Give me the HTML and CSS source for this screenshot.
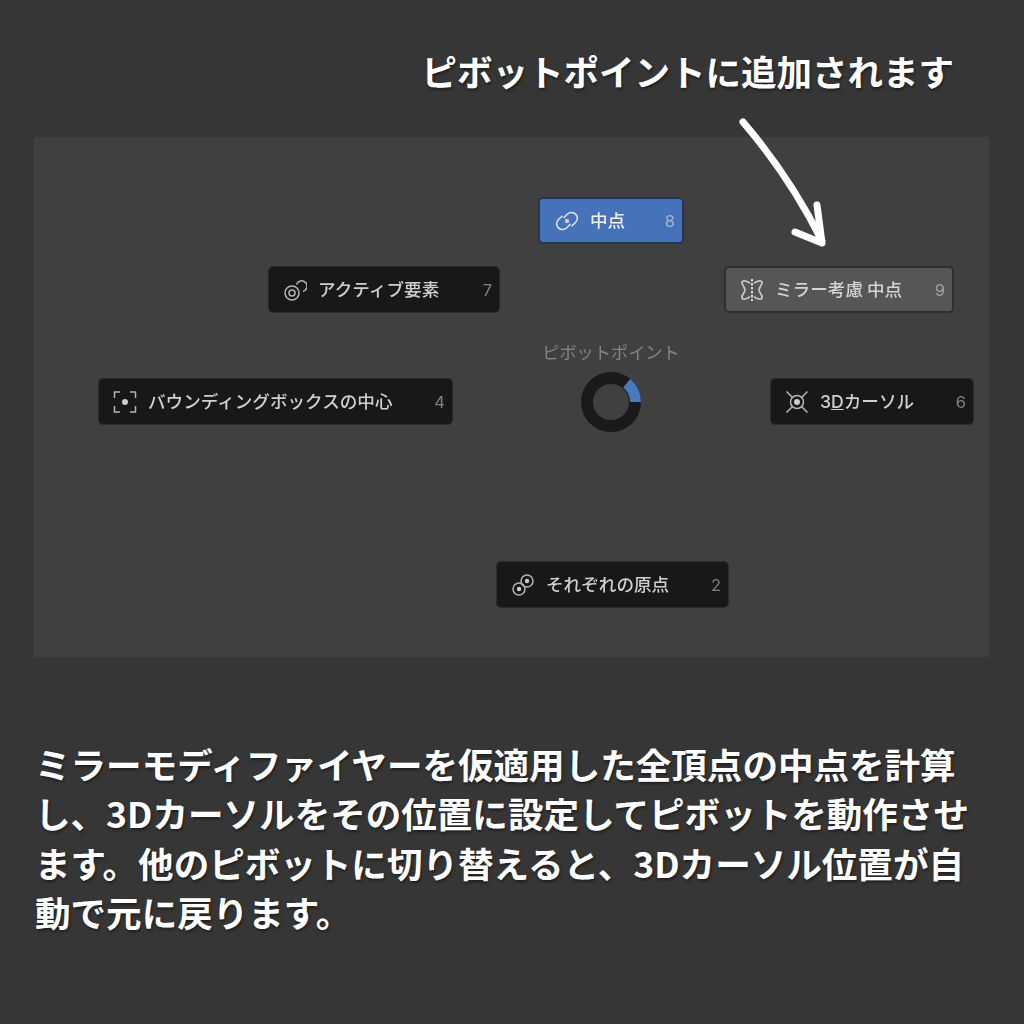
FILE: index.html
```html
<!DOCTYPE html>
<html lang="ja">
  <head>
    <meta charset="UTF-8" />
    <title>ピボットポイント</title>
    <link rel="stylesheet" href="styles.css">
  </head>
  <body>
    <div id="page">
      <h1 class="heading">ピボットポイントに追加されます</h1>

      <div id="panel">
        <div class="pie-item item-mid sel">
          <svg class="icon" viewBox="0 0 24 24"><path d="M8.500 9 12.500 5a5.800 5.800 0 0 1 8.200 8.200l-4.200 4M15.500 15 11.500 19a5.800 5.800 0 0 1-8.200-8.200l4.200-4"/><circle class="dot" cx="12" cy="12" r="2.200"/></svg>
          <span class="label">中点</span>
          <span class="key">8</span>
        </div>

        <div class="pie-item item-active">
          <svg class="icon" viewBox="0 0 24 24"><path d="M13.500 6.500a5.400 5.400 0 1 1 6.500 7"/><circle cx="9" cy="15" r="7"/><circle cx="9" cy="15" r="3"/></svg>
          <span class="label">アクティブ要素</span>
          <span class="key">7</span>
        </div>

        <div class="pie-item item-mirror hover">
          <svg class="icon" viewBox="0 0 24 24"><path d="M10 5.500C8 3 3 2 2 4c-1 2 3 5 3 8s-4 5-3 8c1 2 6 1 8-1.500M14 5.500C16 3 21 2 22 4c1 2-3 5-3 8s4 5 3 8c-1 2-6 1-8-1.500"/><path class="dash" d="M12 1v22"/></svg>
          <span class="label">ミラー考慮 中点</span>
          <span class="key">9</span>
        </div>

        <div class="pie-item item-bbox">
          <svg class="icon" viewBox="0 0 24 24"><path d="M7 2H1.500v6M17 2h5.500v6M7 22H1.500v-6M17 22h5.500v-6"/><circle class="dot" cx="12" cy="12" r="3"/></svg>
          <span class="label">バウンディングボックスの中心</span>
          <span class="key">4</span>
        </div>

        <div class="pie-item item-cursor">
          <svg class="icon" viewBox="0 0 24 24"><circle cx="12" cy="12" r="6.500"/><circle class="dot" cx="12" cy="12" r="3"/><path d="M1.500 1.500 7.500 7.500M22.500 1.500l-6 6M1.500 22.500l6-6M22.500 22.500l-6-6"/></svg>
          <span class="label"><span class="num">3<u>D</u></span>カーソル</span>
          <span class="key">6</span>
        </div>

        <div class="pie-item item-origin">
          <svg class="icon" viewBox="0 0 24 24"><circle cx="16" cy="8" r="6"/><circle class="dot" cx="16" cy="8" r="2.200"/><circle cx="8" cy="16" r="6"/><circle class="dot" cx="8" cy="16" r="2.200"/></svg>
          <span class="label">それぞれの原点</span>
          <span class="key">2</span>
        </div>

        <div class="pie-title">ピボットポイント</div>
        <svg class="pie-ring" viewBox="0 0 60 60">
          <circle class="ring-bg" cx="30" cy="30" r="24"/>
          <path class="ring-sel" d="M45.700 11.200A24.500 24.500 0 0 1 54.500 30"/>
        </svg>
      </div>

      <!-- 矢印はパネルとヘッダーの上に重なる -->
      <svg class="arrow" viewBox="0 0 110 140">
        <path d="M5 5C35 40 62 80 84 124M79 88 84 126 57 115"/>
      </svg>

      <p class="desc">ミラーモディファイヤーを仮適用した全頂点の中点を計算<br>し、3Dカーソルをその位置に設定してピボットを動作させ<br>ます。他のピボットに切り替えると、3Dカーソル位置が自<br>動で元に戻ります。</p>
    </div>
  </body>
</html>
```

FILE: styles.css
```css
* {
  margin: 0;
  padding: 0;
  box-sizing: border-box;
}

body {
  background: #363636;
  font-family: "Noto Sans CJK JP", sans-serif;
}

#page {
  width: 1024px;
  height: 1024px;
  position: relative;
  padding: 46px 34px 0 34px;
  display: flex;
  flex-direction: column;
}

.heading {
  height: 50px;
  line-height: 50px;
  padding-right: 36px;
  text-align: right;
  font-size: 35.500px;
  font-weight: 700;
  color: #fff;
  text-shadow: 1px 2px 3px rgba(0, 0, 0, 0.45);
}

#panel {
  width: 955px;
  height: 520px;
  margin-top: 41px;
  position: relative;
  background: #404040;
  filter: blur(0.5px);
}

.desc {
  margin-top: 82px;
  padding-left: 1px;
  font-size: 35.550px;
  line-height: 49.400px;
  font-weight: 700;
  color: #fff;
  white-space: nowrap;
  text-shadow: 1px 2px 3px rgba(0, 0, 0, 0.45);
}

/* pie menu items */
.pie-item {
  position: absolute;
  height: 47px;
  display: flex;
  align-items: center;
  padding: 0 7px 0 14px;
  gap: 11px;
  background: #181818;
  border: 1px solid #2b2b2b;
  border-radius: 5px;
  color: #cfcfcf;
  font-size: 17.600px;
  font-weight: 500;
}

.pie-item.sel {
  background: #4572b9;
  border: 2px solid #2c3550;
  color: #f0f0f0;
  padding: 0 7px 0 15px;
}

.pie-item.hover {
  background: #565656;
  border: 2px solid #2f2f2f;
  color: #d4d4d4;
  padding: 0 7px 0 14px;
}

.item-mid { left: 504px; top: 60px; width: 146px; }
.item-active { left: 234px; top: 129px; width: 232px; }
.item-mirror { left: 690px; top: 129px; width: 230px; }
.item-bbox { left: 64px; top: 241px; width: 355px; }
.item-cursor { left: 736px; top: 241px; width: 204px; }
.item-origin { left: 462px; top: 424px; width: 233px; }

.icon {
  width: 24px;
  height: 24px;
  flex: none;
  fill: none;
  stroke: #b4b4b4;
  stroke-width: 1.500;
}

.sel .icon {
  stroke: #e2e6ee;
}

.hover .icon {
  stroke: #c4c4c4;
  stroke-width: 1.800;
}

.icon .dot {
  fill: #cccccc;
  stroke: none;
}

.icon .dash {
  stroke: #e6e6e6;
  stroke-dasharray: 2.500 1.500;
}

.label {
  flex: 1;
  white-space: nowrap;
  padding-bottom: 2px;
}

.num {
  font-family: Inter, sans-serif;
}

.key {
  font-family: Inter, sans-serif;
  font-size: 16.500px;
  font-weight: 400;
  color: #808080;
}

.sel .key {
  color: #9fb3d6;
}

.hover .key {
  color: #a0a0a0;
}

.pie-title {
  position: absolute;
  left: 477px;
  top: 202px;
  width: 200px;
  text-align: center;
  font-size: 17.200px;
  line-height: 26px;
  color: #848484;
}

.pie-ring {
  position: absolute;
  left: 547px;
  top: 235px;
  width: 60px;
  height: 60px;
  fill: none;
  stroke-width: 12;
}

.ring-bg {
  stroke: #1a1a1a;
}

.ring-sel {
  stroke: #4a78bc;
  stroke-width: 11;
}

.arrow {
  position: absolute;
  left: 738px;
  top: 117px;
  width: 110px;
  height: 140px;
  fill: none;
  stroke: #fff;
  stroke-width: 7;
  stroke-linecap: round;
  stroke-linejoin: round;
}
```
